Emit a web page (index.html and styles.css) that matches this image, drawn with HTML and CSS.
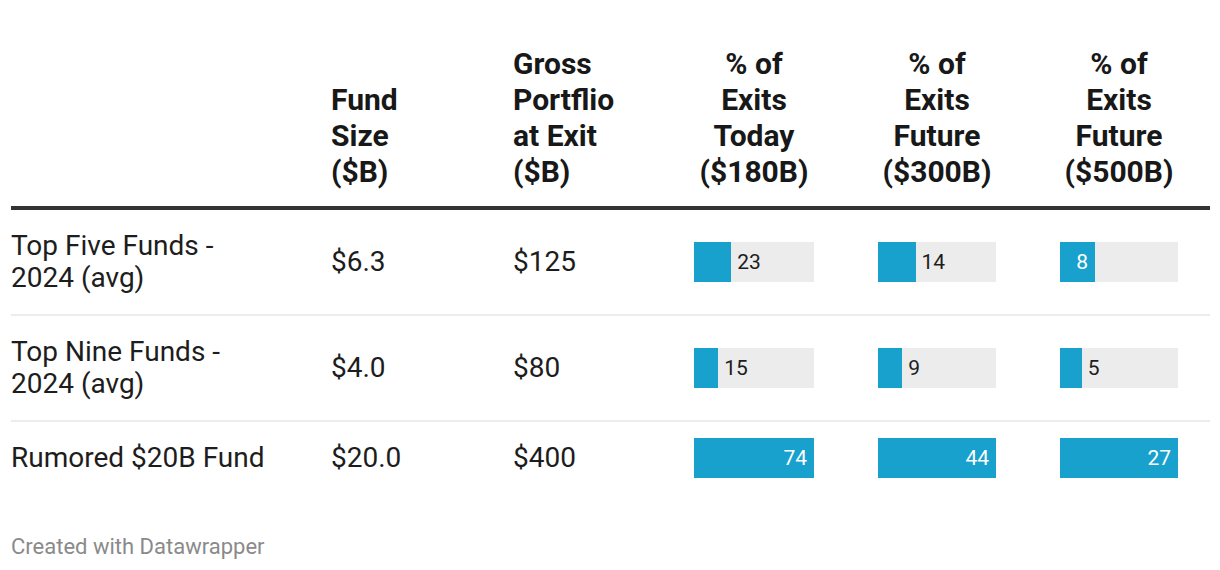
FILE: index.html
```html
<!DOCTYPE html>
<html lang="en">
<head>
<meta charset="utf-8">
<title>Fund exits table</title>
<link rel="stylesheet" href="styles.css">
</head>
<body>
<div class="chart">
  <div class="table">
    <div class="row head">
      <div class="cell c1"></div>
      <div class="cell">Fund<br>Size<br>($B)</div>
      <div class="cell">Gross<br>Portflio<br>at Exit<br>($B)</div>
      <div class="cell"><div class="hbar w120">% of<br>Exits<br>Today<br>($180B)</div></div>
      <div class="cell"><div class="hbar w118">% of<br>Exits<br>Future<br>($300B)</div></div>
      <div class="cell"><div class="hbar w118">% of<br>Exits<br>Future<br>($500B)</div></div>
    </div>
    <div class="row body tall">
      <div class="cell c1">Top Five Funds -<br>2024 (avg)</div>
      <div class="cell">$6.3</div>
      <div class="cell">$125</div>
      <div class="cell"><div class="bar w120"><div class="fill" style="width:31.08%"></div><span class="lbl out">23</span></div></div>
      <div class="cell"><div class="bar w118"><div class="fill" style="width:31.82%"></div><span class="lbl out">14</span></div></div>
      <div class="cell"><div class="bar w118"><div class="fill" style="width:29.63%"><span class="lbl in">8</span></div></div></div>
    </div>
    <div class="row body tall">
      <div class="cell c1">Top Nine Funds -<br>2024 (avg)</div>
      <div class="cell">$4.0</div>
      <div class="cell">$80</div>
      <div class="cell"><div class="bar w120"><div class="fill" style="width:20.27%"></div><span class="lbl out">15</span></div></div>
      <div class="cell"><div class="bar w118"><div class="fill" style="width:20.45%"></div><span class="lbl out">9</span></div></div>
      <div class="cell"><div class="bar w118"><div class="fill" style="width:18.52%"></div><span class="lbl out">5</span></div></div>
    </div>
    <div class="row body short">
      <div class="cell c1">Rumored $20B Fund</div>
      <div class="cell">$20.0</div>
      <div class="cell">$400</div>
      <div class="cell"><div class="bar w120"><div class="fill" style="width:100%"><span class="lbl in">74</span></div></div></div>
      <div class="cell"><div class="bar w118"><div class="fill" style="width:100%"><span class="lbl in">44</span></div></div></div>
      <div class="cell"><div class="bar w118"><div class="fill" style="width:100%"><span class="lbl in">27</span></div></div></div>
    </div>
  </div>
  <div class="footer">Created with Datawrapper</div>
</div>
</body>
</html>
```

FILE: styles.css
```css
html, body {
  margin: 0;
  padding: 0;
  background: #ffffff;
}

body {
  font-family: Roboto, "Liberation Sans", sans-serif;
  color: #1d1d1d;
}

.chart {
  width: 1199px;
  padding-left: 11px;
}

.row {
  display: grid;
  grid-template-columns: 310px 182px 181px 184px 182px 160px;
}

.cell {
  padding-left: 10px;
  display: flex;
  align-items: center;
  white-space: nowrap;
}

.cell.c1 {
  padding-left: 0;
}

.head {
  box-sizing: content-box;
  height: 144px;
  padding-top: 46px;
  padding-bottom: 16px;
  border-bottom: 4px solid #333333;
  font-weight: 700;
  font-size: 30px;
  line-height: 36px;
  color: #181818;
}

.head .cell {
  align-items: flex-end;
}

.hbar {
  text-align: center;
  display: flex;
  flex-direction: column;
  align-items: center;
}

.hbar {
  display: block;
}

.body {
  font-size: 28px;
  line-height: 32px;
  border-bottom: 2px solid #ececec;
}

.body.tall {
  height: 104px;
}

.body.short {
  height: 72px;
  border-bottom: none;
}

.w120 { width: 120px; }
.w118 { width: 118px; }

.bar {
  height: 40px;
  background: #ececec;
  display: flex;
  align-items: center;
}

.fill {
  height: 100%;
  background: #18a1cd;
  display: flex;
  align-items: center;
  justify-content: flex-end;
  flex: none;
}

.lbl {
  font-size: 21px;
  line-height: 24px;
}

.lbl.out {
  padding-left: 6px;
  color: #1d1d1d;
}

.lbl.in {
  padding-right: 7px;
  color: #ffffff;
}

.footer {
  margin-top: 40px;
  font-size: 22px;
  line-height: 26px;
  color: #8a8a8a;
}
```
